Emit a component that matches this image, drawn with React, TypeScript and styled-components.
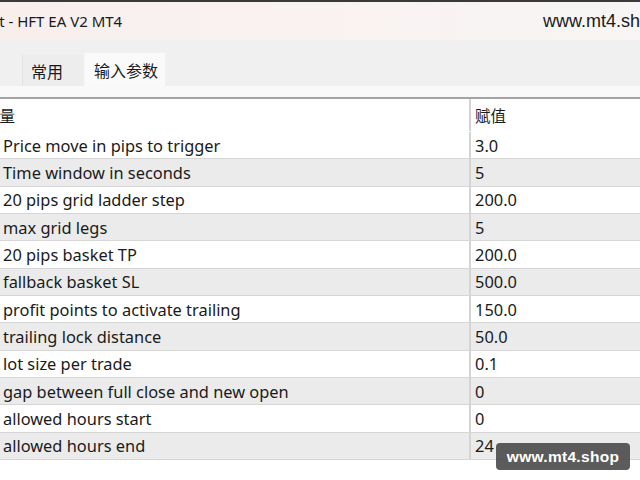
import React from 'react';
import styled, { createGlobalStyle } from 'styled-components';

const GlobalStyle = createGlobalStyle`
  html, body {
    margin: 0;
    padding: 0;
    width: 640px;
    height: 480px;
    overflow: hidden;
    background: #ffffff;
    font-family: "Noto Sans", "Noto Sans CJK SC", sans-serif;
    color: #1a1a1a;
  }
`;

const Window = styled.div`
  width: 640px;
  height: 480px;
  display: flex;
  flex-direction: column;
  background: #ffffff;
`;

const TitleBar = styled.div`
  height: 38px;
  border-top: 2px solid #3a3a3a;
  background: linear-gradient(90deg, #f8efed 0%, #f9f3f2 60%, #f7f5f5 100%);
  display: flex;
  align-items: center;
  justify-content: space-between;
  overflow: hidden;
  white-space: nowrap;
`;

const TitleText = styled.span`
  font-size: 15px;
  margin-left: -41px;
  color: #1a1a1a;
`;

const Site = styled.span`
  font-family: "Liberation Sans", Arial, sans-serif;
  font-size: 18px;
  margin-right: -20px;
  color: #1a1a1a;
`;

const TabStrip = styled.div`
  height: 46px;
  background: #f0f0f0;
  display: flex;
  align-items: flex-end;
  padding-left: 22px;
  gap: 1px;
`;

const Tab = styled.div<{ $active?: boolean }>`
  box-sizing: border-box;
  width: ${(p) => (p.$active ? 81 : 61)}px;
  height: ${(p) => (p.$active ? 33 : 31)}px;
  padding-left: ${(p) => (p.$active ? 9 : 8)}px;
  display: flex;
  align-items: center;
  font-size: 16px;
  font-family: "Noto Sans CJK SC", sans-serif;
  background: ${(p) => (p.$active ? '#fafafa' : '#ededed')};
  border-left: 1px solid ${(p) => (p.$active ? '#f4f4f4' : '#e2e2e2')};
  color: #1a1a1a;
`;

const Gap = styled.div`
  height: 11px;
  background: #f9f9f9;
  border-bottom: 2px solid #a3a3a3;
`;

const Table = styled.div`
  display: flex;
  flex-direction: column;
`;

const Row = styled.div<{ $shade?: boolean; $head?: boolean }>`
  box-sizing: border-box;
  height: ${(p) => (p.$head ? 33 : 27.33)}px;
  display: grid;
  grid-template-columns: 469px 1fr;
  background: ${(p) => (p.$shade ? '#ebebeb' : '#ffffff')};
  border-bottom: 1px solid ${(p) => (p.$head ? 'transparent' : '#d6d6d6')};
  font-size: 16.4px;
`;

const Cell = styled.div<{ $value?: boolean; $head?: boolean }>`
  display: flex;
  align-items: center;
  padding-left: ${(p) => (p.$value ? 4 : 3)}px;
  border-left: ${(p) => (p.$value ? '2px solid #d4d4d4' : 'none')};
  white-space: nowrap;
  overflow: hidden;
  font-size: ${(p) => (p.$head ? 15.5 : 16.4)}px;
  font-family: ${(p) =>
    p.$head ? '"Noto Sans CJK SC", sans-serif' : '"Noto Sans", "Noto Sans CJK SC", sans-serif'};
`;

const HeadName = styled.span`
  margin-left: -19px;
`;

const Watermark = styled.div`
  position: absolute;
  left: 496px;
  top: 443px;
  width: 134px;
  height: 27px;
  border-radius: 4px;
  background: rgba(70, 70, 70, 0.88);
  color: #ffffff;
  font-family: "Liberation Sans", Arial, sans-serif;
  font-weight: bold;
  font-size: 15.5px;
  display: flex;
  align-items: center;
  justify-content: center;
  letter-spacing: 0.3px;
`;

const params: [string, string][] = [
  ['Price move in pips to trigger', '3.0'],
  ['Time window in seconds', '5'],
  ['20 pips grid ladder step', '200.0'],
  ['max grid legs', '5'],
  ['20 pips basket TP', '200.0'],
  ['fallback basket SL', '500.0'],
  ['profit points to activate trailing', '150.0'],
  ['trailing lock distance', '50.0'],
  ['lot size per trade', '0.1'],
  ['gap between full close and new open', '0'],
  ['allowed hours start', '0'],
  ['allowed hours end', '24'],
];

export default function App() {
  return (
    <>
      <GlobalStyle />
      <Window>
        <TitleBar>
          <TitleText>Expert - HFT EA V2 MT4</TitleText>
          <Site>www.mt4.shop</Site>
        </TitleBar>
        <TabStrip>
          <Tab>常用</Tab>
          <Tab $active>输入参数</Tab>
        </TabStrip>
        <Gap />
        <Table>
          <Row $head>
            <Cell $head>
              <HeadName>变量</HeadName>
            </Cell>
            <Cell $head $value>赋值</Cell>
          </Row>
          {params.map(([name, value], i) => (
            <Row key={name} $shade={i % 2 === 1}>
              <Cell>{name}</Cell>
              <Cell $value>{value}</Cell>
            </Row>
          ))}
        </Table>
      </Window>
      <Watermark>www.mt4.shop</Watermark>
    </>
  );
}
